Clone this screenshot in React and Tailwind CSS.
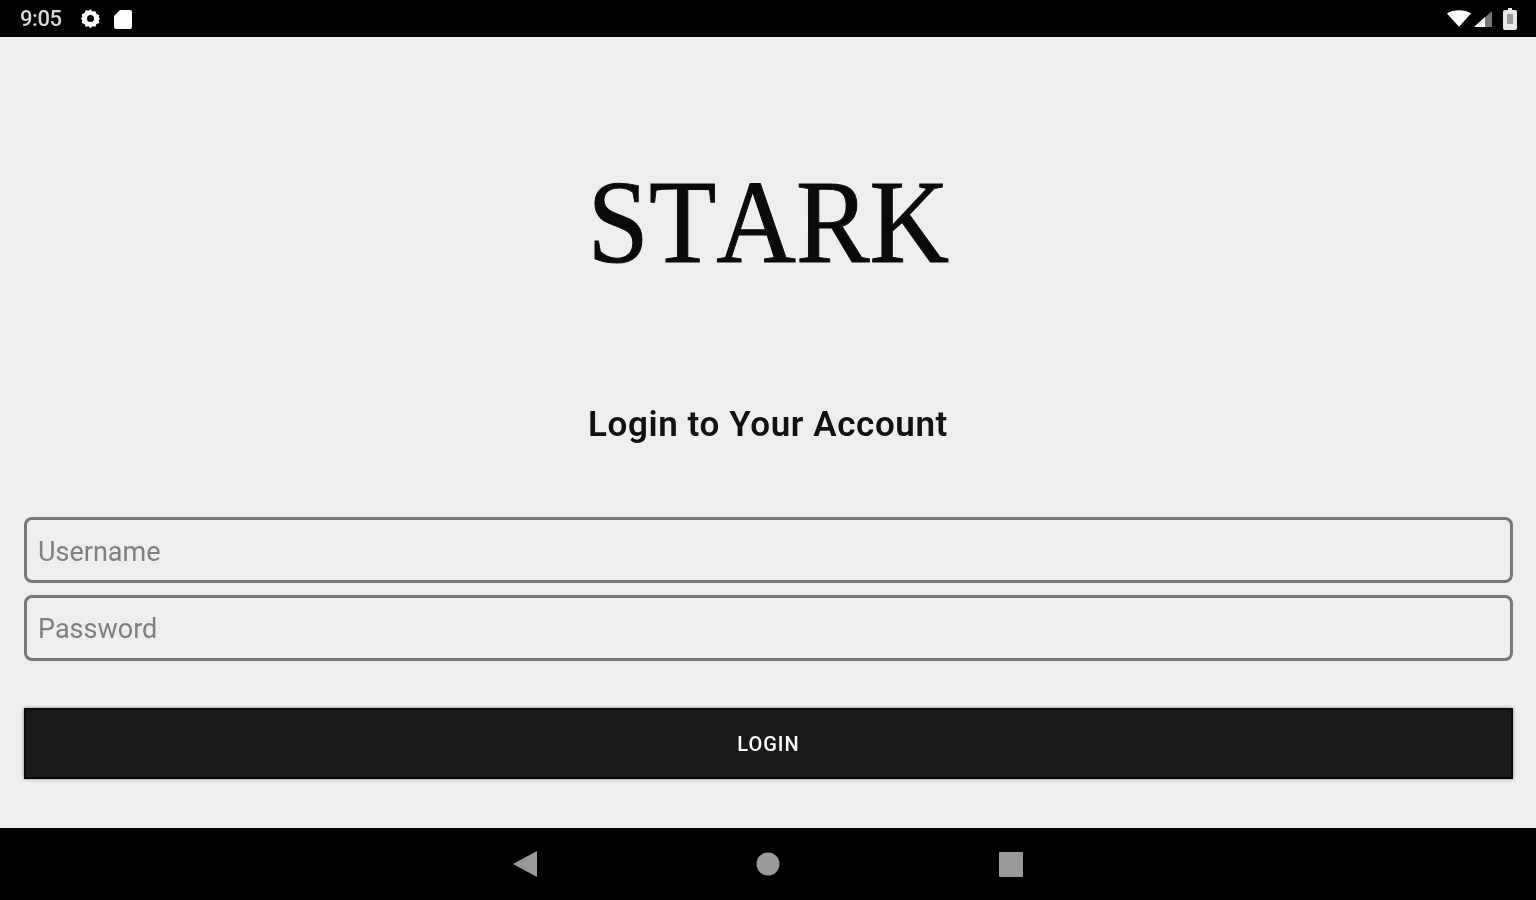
export default function App() {
  return (
    <div className="w-[1536px] h-[900px] flex flex-col bg-[#eeeeee] overflow-hidden font-['Roboto',sans-serif] blur-[0.6px]">
      <div className="h-[37px] shrink-0 bg-black flex items-center justify-between pl-[20px] pr-[19px] text-white">
        <div className="flex items-center">
          <span className="text-[22px] leading-none font-medium tracking-[-0.4px] text-[#d8d8d8] w-[44px]">9:05</span>
          <svg className="ml-[16px]" width="21" height="21" viewBox="0 0 24 24" fill="#fff" fillRule="evenodd">
            <path d="M12 1.500l2.200 2.600 3.400-.5 1.200 3.200 3.200 1.200-.5 3.400L23 12l-1.500 1.600.5 3.400-3.200 1.200-1.200 3.200-3.400-.5L12 23l-2.200-2.100-3.400.5-1.200-3.200L2 17l.5-3.400L1 12l1.500-1.600L2 7l3.200-1.200 1.200-3.200 3.400.5zM12 8a4 4 0 1 0 0 8 4 4 0 0 0 0-8z" />
          </svg>
          <svg className="ml-[13px]" width="18" height="20" viewBox="0 0 18 20" fill="#fff">
            <path d="M6 1h10a2 2 0 0 1 2 2v15a2 2 0 0 1-2 2H2a2 2 0 0 1-2-2V7z" />
          </svg>
        </div>
        <div className="flex items-center">
          <svg width="24" height="19" viewBox="0 0 26 20" fill="#fff">
            <path d="M0 4.500C3.500 2 8 1 13 1s9.500 1 13 3.500L13 19z" />
          </svg>
          <svg className="ml-[3px]" width="18" height="18" viewBox="0 0 18 18">
            <path d="M0 17L18 1v16z" fill="#777" />
            <path d="M0 17l11-10v10z" fill="#fff" />
          </svg>
          <svg className="ml-[11px]" width="14" height="22" viewBox="0 0 14 22">
            <path d="M5 0h4v2h3a2 2 0 0 1 2 2v16a2 2 0 0 1-2 2H2a2 2 0 0 1-2-2V4a2 2 0 0 1 2-2h3z" fill="#e8e8e8" />
            <rect x="4" y="6" width="6" height="10" fill="#999" />
          </svg>
        </div>
      </div>

      <main className="flex-1 flex flex-col px-[24px]">
        <div className="mt-[126px] h-[120px] flex justify-center items-center">
          <span className="font-['Liberation_Serif',serif] text-[118px] leading-none text-[#0a0a0a] [font-kerning:none] scale-x-[0.935] [-webkit-text-stroke:1px_#0a0a0a]">STARK</span>
        </div>
        <h1 className="mt-[122px] text-center text-[35px] leading-[40px] font-semibold tracking-[0.6px] text-[#111111]">Login to Your Account</h1>
        <div className="mt-[72px] flex flex-col gap-[12px]">
          <div className="h-[66px] border-[3px] border-[#777777] rounded-[8px] flex items-center pl-[11px] pt-[5px] text-[27px] text-[#808080] w-[1489px]">Username</div>
          <div className="h-[66px] border-[3px] border-[#777777] rounded-[8px] flex items-center pl-[11px] pt-[3px] text-[27px] text-[#808080] w-[1489px]">Password</div>
        </div>
        <button className="mt-[47px] h-[71px] w-[1489px] bg-[#191919] border-[2px] border-[#0a0a0a] text-white text-[20px] font-medium tracking-[1px] flex items-center justify-center shadow-[0_0_3px_#777]">LOGIN</button>
      </main>

      <div className="h-[72px] shrink-0 bg-black flex items-center justify-center gap-[219px]">
        <svg width="24" height="26" viewBox="0 0 24 26" fill="#999999"><path d="M24 0v26L0 13z" /></svg>
        <svg width="24" height="24" viewBox="0 0 24 24" fill="#999999"><circle cx="12" cy="12" r="11.500" /></svg>
        <svg width="24" height="25" viewBox="0 0 24 25" fill="#999999"><rect width="24" height="25" rx="1" /></svg>
      </div>
    </div>
  );
}
